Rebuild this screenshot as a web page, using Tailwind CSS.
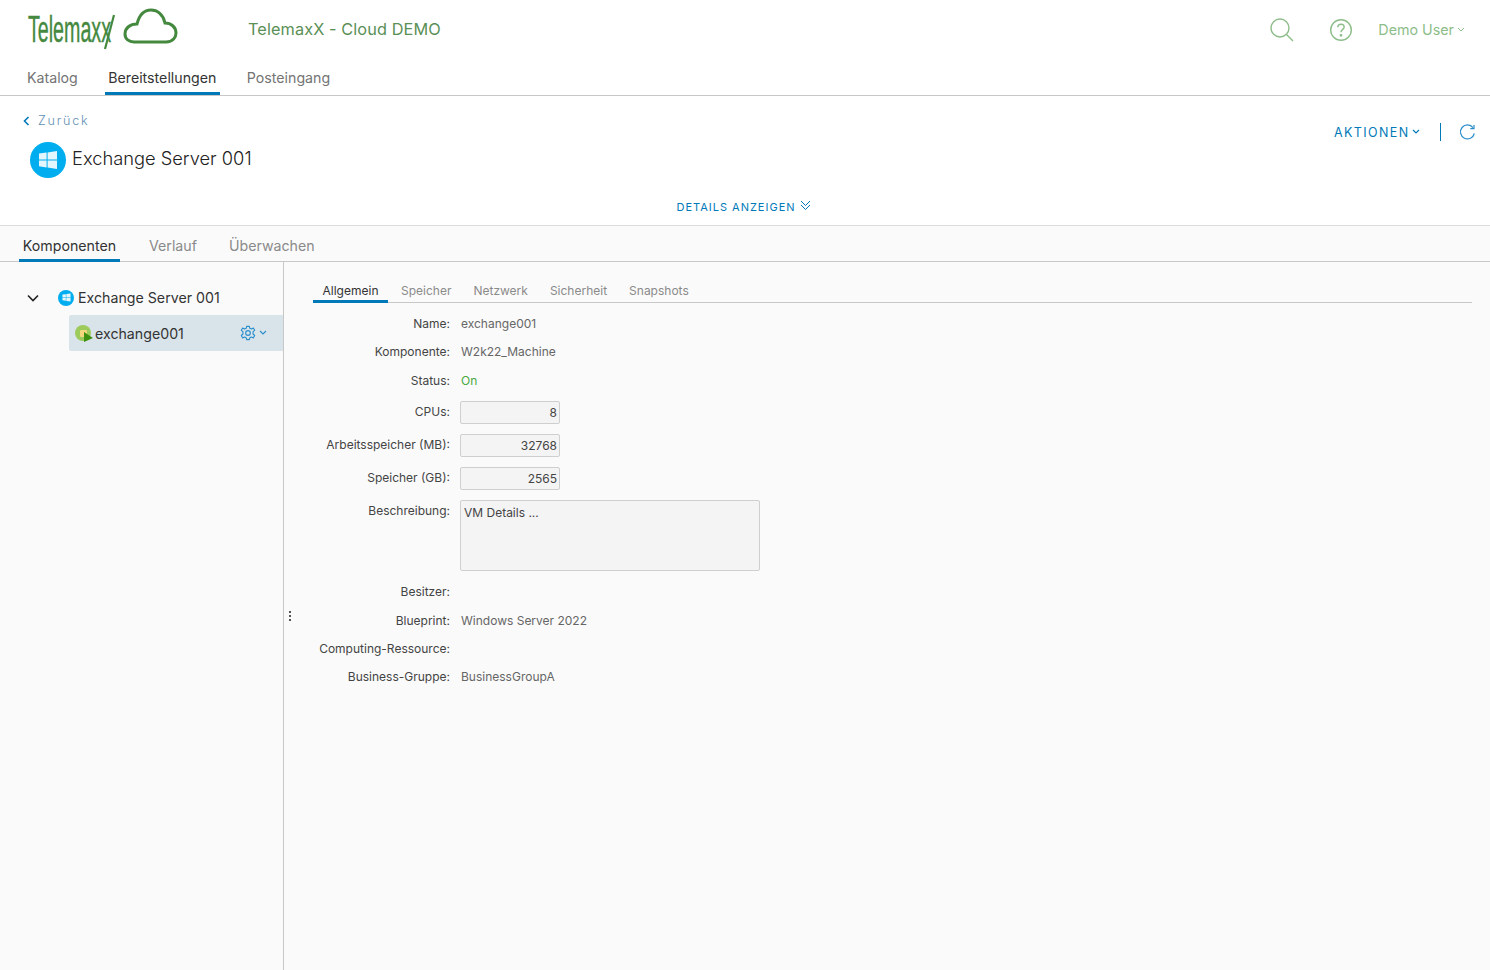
<!DOCTYPE html>
<html lang="de">
<head>
  <meta charset="UTF-8">
  <title>TelemaxX - Cloud DEMO</title>
  <script src="https://cdn.jsdelivr.net/npm/@tailwindcss/browser@4"></script>
</head>
<body class="h-[970px] overflow-hidden bg-[#fafafa] font-['Inter',sans-serif] font-light text-[#333]">

<!-- Top header -->
<header class="h-[96px] bg-white border-b border-[#c8c8c8]">
  <div class="flex h-[60px] items-start">
    <div class="ml-[27px] mt-[6px] flex items-start">
      <svg width="152" height="44" viewBox="0 0 152 44" class="block">
        <text x="1" y="36" font-family="Liberation Sans" font-size="36" fill="#45893f" stroke="#45893f" stroke-width="0.4" textLength="83" lengthAdjust="spacingAndGlyphs">Telemaxx</text>
        <path d="M87 9 L78 43" stroke="#45893f" stroke-width="2.2" fill="none"/>
        <path d="M107 36 H139 C146 36 149 31 149 27 C149 21 144 17 138 17 C136 8 130 4 124 4 C116 4 112 10 110 18 C103 18 98 22 98 28 C98 33 102 36 107 36 Z" fill="none" stroke="#45893f" stroke-width="3"/>
      </svg>
    </div>
    <div class="ml-[69px] mt-[19px] text-[16.3px] leading-[20px] tracking-[0.1px] text-[#5a8f56] font-normal">TelemaxX - Cloud DEMO</div>
    <div class="ml-auto mt-[18px] flex items-center text-[#8dbd89]">
      <svg width="24" height="24" viewBox="0 0 24 24" fill="none" stroke="currentColor" stroke-width="1.4"><circle cx="10" cy="10" r="9"/><path d="M16.5 16.5 L23 23"/></svg>
      <svg class="ml-[35px]" width="24" height="24" viewBox="0 0 24 24" fill="none" stroke="currentColor" stroke-width="1.4"><circle cx="12" cy="12" r="10.3"/><path d="M8.8 9.3 C8.8 7.3 10.3 6.2 12 6.2 C13.8 6.2 15.2 7.4 15.2 9 C15.2 11.3 12 11.5 12 14.2"/><circle cx="12" cy="17.3" r="0.7" fill="currentColor"/></svg>
      <span class="ml-[25px] text-[14.3px] font-normal">Demo User</span>
      <svg class="ml-[3px] mr-[25px]" width="8" height="6" viewBox="0 0 8 6" fill="none" stroke="currentColor" stroke-width="1"><path d="M1 1 L4 4 L7 1"/></svg>
    </div>
  </div>
  <nav class="flex h-[35px] text-[14.2px] font-normal">
    <a class="ml-[27px] pt-[7px] text-[#747474]">Katalog</a>
    <a class="ml-[27px] w-[115px] pt-[7px] text-center text-[#333] border-b-[3px] border-[#0079b8]">Bereitstellungen</a>
    <a class="ml-[27px] pt-[7px] text-[#747474]">Posteingang</a>
  </nav>
</header>

<!-- Item title block -->
<section class="relative h-[130px] bg-white border-b border-[#dcdcdc]">
  <div class="flex items-center pl-[23px] pt-[17px] text-[12.5px] leading-[15px] tracking-[1.8px] text-[#5f8fb4]">
    <svg width="7" height="10" viewBox="0 0 7 10" fill="none" stroke="#0079b8" stroke-width="1.6"><path d="M5.5 1 L1.5 5 L5.5 9"/></svg>
    <span class="ml-[8px]">Zurück</span>
  </div>
  <div class="ml-[30px] mt-[14px] flex items-center">
    <div class="flex h-[36px] w-[36px] items-center justify-center rounded-full bg-[#00aeef]">
      <svg width="20" height="20" viewBox="0 0 20 20" fill="#e3f6fd"><path d="M1 3.6 L8.6 2.5 V9.4 H1 Z M9.6 2.4 L19 1 V9.4 H9.6 Z M1 10.4 H8.6 V17.4 L1 16.3 Z M9.6 10.4 H19 V19 L9.6 17.6 Z"/></svg>
    </div>
    <h1 class="ml-[6px] -mt-[2px] text-[18.3px] font-light text-[#222]">Exchange Server 001</h1>
  </div>
  <div class="absolute right-[14px] top-[27px] flex items-center text-[#0079b8]">
    <span class="relative top-[1px] text-[12.5px] font-normal tracking-[1.4px]">AKTIONEN</span>
    <svg class="ml-[2px]" width="8" height="6" viewBox="0 0 8 6" fill="none" stroke="currentColor" stroke-width="1.2"><path d="M1 1 L4 4 L7 1"/></svg>
    <div class="ml-[20px] h-[18px] w-[1.5px] bg-[#0079b8]"></div>
    <svg class="ml-[18px]" width="17" height="17" viewBox="0 0 17 17" fill="none" stroke="#2b8ecb" stroke-width="1.2"><path d="M14 3.6 A7 7 0 1 0 15.3 9.5"/><path d="M15 1 V4.6 H11.3"/></svg>
  </div>
  <div class="absolute left-0 right-0 top-[103px] flex justify-center pr-[3px] text-[#0079b8]">
    <span class="text-[11px] font-normal tracking-[1px]">DETAILS ANZEIGEN</span>
    <svg class="ml-[4px] mt-[1px]" width="11" height="11" viewBox="0 0 11 11" fill="none" stroke="currentColor" stroke-width="1"><path d="M1 1 L5.5 5.5 L10 1 M1 5 L5.5 9.5 L10 5"/></svg>
  </div>
</section>

<!-- Item tabs -->
<div class="flex h-[36px] border-b border-[#c8c8c8] pl-[19px] text-[14.2px] font-normal">
  <a class="h-[36px] w-[101px] pt-[9px] text-center text-[#333] border-b-[3px] border-[#0079b8]">Komponenten</a>
  <a class="ml-[29px] pt-[9px] text-[#8a8a8a]">Verlauf</a>
  <a class="ml-[32px] pt-[9px] text-[#8a8a8a]">Überwachen</a>
</div>

<div class="flex h-[708px]">
  <!-- Tree -->
  <aside class="w-[284px] shrink-0 border-r border-[#c8c8c8] pt-[18px]">
    <div class="flex h-[35px] items-center text-[14.2px] font-normal text-[#333]">
      <svg class="ml-[27px]" width="12" height="8" viewBox="0 0 12 8" fill="none" stroke="#222" stroke-width="1.6"><path d="M1 1.5 L6 6.5 L11 1.5"/></svg>
      <div class="ml-[19px] flex h-[16px] w-[16px] items-center justify-center rounded-full bg-[#00aeef]">
        <svg width="9" height="9" viewBox="0 0 20 20" fill="#e3f6fd"><path d="M1 3.6 L8.6 2.5 V9.4 H1 Z M9.6 2.4 L19 1 V9.4 H9.6 Z M1 10.4 H8.6 V17.4 L1 16.3 Z M9.6 10.4 H19 V19 L9.6 17.6 Z"/></svg>
      </div>
      <span class="ml-[4px]">Exchange Server 001</span>
    </div>
    <div class="ml-[69px] flex h-[36px] items-center rounded-l-[2px] bg-[#d9e4ea] text-[14.2px] font-normal text-[#333]">
      <div class="relative ml-[6px] flex h-[16px] w-[16px] items-center justify-center rounded-full bg-[#9ccb5c]">
        <div class="h-[7px] w-[7px] rounded-[1px] bg-[#f4d77c]"></div>
        <svg class="absolute left-[8px] top-[6px]" width="11" height="12" viewBox="0 0 11 12"><path d="M1 1 L10 7 L1 11 Z" fill="#3f9010"/></svg>
      </div>
      <span class="relative top-[1px] ml-[4px]">exchange001</span>
      <svg class="ml-auto" width="16" height="16" viewBox="0 0 24 24" fill="none" stroke="#2b8ecb" stroke-width="1.7"><circle cx="12" cy="12" r="3.5"/><path d="M10 2 H14 L14.7 5 L17.3 6.1 L20 4.5 L22 8 L19.6 10 V13.5 L22 15.8 L20 19.4 L17.2 18 L14.7 19.2 L14 22 H10 L9.3 19.2 L6.8 18 L4 19.4 L2 15.8 L4.4 13.5 V10 L2 8 L4 4.5 L6.7 6.1 L9.3 5 Z" stroke-linejoin="round"/></svg>
      <svg class="ml-[3px] mr-[16px]" width="8" height="6" viewBox="0 0 8 6" fill="none" stroke="#2b8ecb" stroke-width="1.2"><path d="M1 1 L4 4 L7 1"/></svg>
    </div>
  </aside>

  <!-- Detail panel -->
  <main class="relative flex-1 pl-[29px] pr-[18px] pt-[16px]">
    <div class="absolute left-[5px] top-[349px] flex flex-col gap-[2px]">
      <div class="h-[2px] w-[2px] bg-[#555]"></div>
      <div class="h-[2px] w-[2px] bg-[#555]"></div>
      <div class="h-[2px] w-[2px] bg-[#555]"></div>
    </div>

    <div class="flex h-[25px] border-b border-[#c8c8c8] text-[12px] font-normal text-[#8a8a8a]">
      <a class="h-[25px] w-[75px] pt-[4px] text-center text-[#333] border-b-[3px] border-[#0079b8]">Allgemein</a>
      <a class="ml-[13px] pt-[4px]">Speicher</a>
      <a class="ml-[22px] pt-[4px]">Netzwerk</a>
      <a class="ml-[22px] pt-[4px]">Sicherheit</a>
      <a class="ml-[22px] pt-[4px]">Snapshots</a>
    </div>

    <div class="text-[12px] font-normal leading-[15px] text-[#666]">
      <div class="mt-[13px] flex h-[15px]"><label class="w-[137px] text-right text-[#444]">Name:</label><span class="ml-[11px]">exchange001</span></div>
      <div class="mt-[13px] flex h-[15px]"><label class="w-[137px] text-right text-[#444]">Komponente:</label><span class="ml-[11px]">W2k22_Machine</span></div>
      <div class="mt-[14px] flex h-[15px]"><label class="w-[137px] text-right text-[#444]">Status:</label><span class="ml-[11px] text-[#48a83c]">On</span></div>

      <div class="mt-[13px] flex h-[23px]"><label class="w-[137px] pt-[3px] text-right text-[#444]">CPUs:</label><div class="ml-[10px] flex h-[23px] w-[100px] items-center justify-end rounded-[2px] border border-[#cfcfcf] bg-[#f4f4f4] pr-[2px] text-[#444]">8</div></div>
      <div class="mt-[10px] flex h-[23px]"><label class="w-[137px] pt-[3px] text-right text-[#444]">Arbeitsspeicher (MB):</label><div class="ml-[10px] flex h-[23px] w-[100px] items-center justify-end rounded-[2px] border border-[#cfcfcf] bg-[#f4f4f4] pr-[2px] text-[#444]">32768</div></div>
      <div class="mt-[10px] flex h-[23px]"><label class="w-[137px] pt-[3px] text-right text-[#444]">Speicher (GB):</label><div class="ml-[10px] flex h-[23px] w-[100px] items-center justify-end rounded-[2px] border border-[#cfcfcf] bg-[#f4f4f4] pr-[2px] text-[#444]">2565</div></div>

      <div class="mt-[10px] flex h-[71px]"><label class="w-[137px] pt-[3px] text-right text-[#444]">Beschreibung:</label><div class="ml-[10px] h-[71px] w-[300px] rounded-[2px] border border-[#cfcfcf] bg-[#f4f4f4] pl-[3px] pt-[4px] text-[#444]">VM Details ...</div></div>

      <div class="mt-[13px] flex h-[15px]"><label class="w-[137px] text-right text-[#444]">Besitzer:</label></div>
      <div class="mt-[14px] flex h-[15px]"><label class="w-[137px] text-right text-[#444]">Blueprint:</label><span class="ml-[11px]">Windows Server 2022</span></div>
      <div class="mt-[13px] flex h-[15px]"><label class="w-[137px] text-right text-[#444]">Computing-Ressource:</label></div>
      <div class="mt-[13px] flex h-[15px]"><label class="w-[137px] text-right text-[#444]">Business-Gruppe:</label><span class="ml-[11px]">BusinessGroupA</span></div>
    </div>
  </main>
</div>
</body>
</html>
